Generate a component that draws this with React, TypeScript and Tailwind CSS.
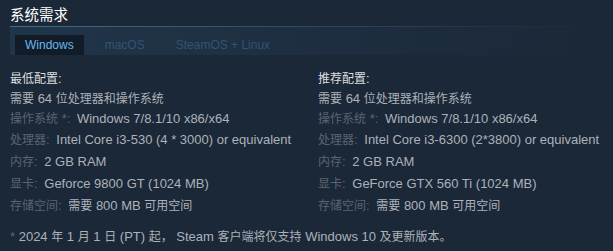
const font = { fontFamily: '"Liberation Sans", "Noto Sans CJK SC", Arial, sans-serif' };

type Row = { label?: string; value: string };

const minReq: Row[] = [
  { value: "需要 64 位处理器和操作系统" },
  { label: "操作系统 *:", value: "Windows 7/8.1/10 x86/x64" },
  { label: "处理器:", value: "Intel Core i3-530 (4 * 3000) or equivalent" },
  { label: "内存:", value: "2 GB RAM" },
  { label: "显卡:", value: "Geforce 9800 GT (1024 MB)" },
  { label: "存储空间:", value: "需要 800 MB 可用空间" },
];

const recReq: Row[] = [
  { value: "需要 64 位处理器和操作系统" },
  { label: "操作系统 *:", value: "Windows 7/8.1/10 x86/x64" },
  { label: "处理器:", value: "Intel Core i3-6300 (2*3800) or equivalent" },
  { label: "内存:", value: "2 GB RAM" },
  { label: "显卡:", value: "GeForce GTX 560 Ti (1024 MB)" },
  { label: "存储空间:", value: "需要 800 MB 可用空间" },
];

// CJK glyphs in the source render a bit narrower than the latin text size
function Txt({ children }: { children: string }) {
  const parts = children.split(/([\u3000-\u303f\u4e00-\u9fff\uff00-\uffef]+)/);
  return (
    <>
      {parts.map((p, i) =>
        i % 2 === 1 ? (
          <span key={i} className="text-[12px]">
            {p}
          </span>
        ) : (
          p
        )
      )}
    </>
  );
}

function ReqColumn({ title, rows }: { title: string; rows: Row[] }) {
  return (
    <div>
      <div className="leading-5 text-[#dcdedf]">
        <Txt>{title}</Txt>
      </div>
      <ul>
        {rows.map((r, i) => (
          <li key={i} className={i < 2 ? "leading-5" : "leading-[22px]"}>
            {r.label && (
              <span className="text-[#5b6470] mr-[3px]">
                <Txt>{r.label}</Txt>{" "}
              </span>
            )}
            <span className="text-[#acb2b8]">
              <Txt>{r.value}</Txt>
            </span>
          </li>
        ))}
      </ul>
    </div>
  );
}

export default function App() {
  const tabs = ["Windows", "macOS", "SteamOS + Linux"];

  return (
    <div className="w-[613px] h-[251px] bg-[#1b2838] px-[10px] text-[13px] overflow-hidden" style={font}>
      <div className="h-[26px] pt-[5px] text-[14.5px] leading-5 text-white">系统需求</div>
      <div className="h-px bg-gradient-to-r from-[#3f6f8e] to-[#1b2838]" />
      <div className="h-[28px] pl-[5px] pt-[8px] flex gap-[11px] bg-gradient-to-r from-[#213549] to-[#1b2838]">
        {tabs.map((t, i) => (
          <div
            key={t}
            className={
              "h-5 px-[10px] text-[12px] leading-5 " +
              (i === 0 ? "bg-[#121c28] text-[#66b9ee]" : "text-[#2f5575]")
            }
          >
            {t}
          </div>
        ))}
      </div>
      <div className="mt-[14px] grid grid-cols-[308px_1fr]">
        <ReqColumn title="最低配置:" rows={minReq} />
        <ReqColumn title="推荐配置:" rows={recReq} />
      </div>
      <div className="mt-[10px] leading-5 text-[#acb2b8]">
        <span className="text-[#5b6470]">* </span>
        <Txt>2024 年 1 月 1 日 (PT) 起， Steam 客户端将仅支持 Windows 10 及更新版本。</Txt>
      </div>
    </div>
  );
}
